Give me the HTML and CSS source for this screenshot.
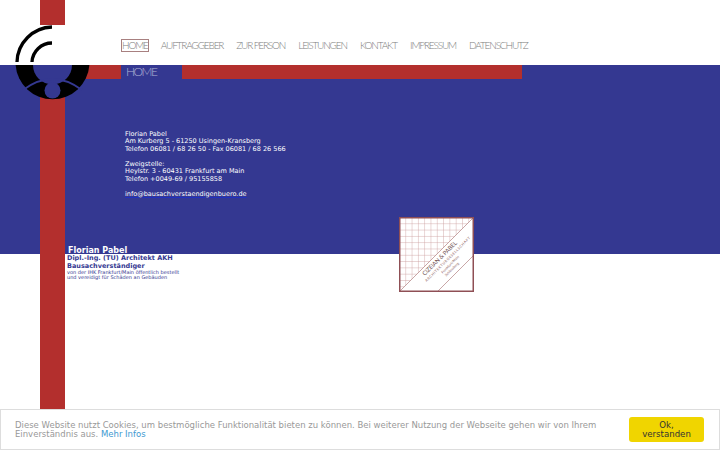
FILE: index.html
```html
<!DOCTYPE html>
<html lang="de">
<head>
    <meta charset="UTF-8">
    <title>Florian Pabel - Home</title>
    <link rel="stylesheet" href="styles.css">
</head>
<body>

<div class="stripe"></div>

<svg class="logo" width="75" height="76" viewBox="0 0 75 76">
    <rect width="75" height="40" fill="#fff"/>
    <path d="M 37 2 A 36 36 0 0 0 2 37" fill="none" stroke="#000" stroke-width="3.300"/>
    <path d="M 37 18 A 20 20 0 0 0 17 37" fill="none" stroke="#000" stroke-width="3.300"/>
    <path d="M 0.600 40 H 74.400 A 37 37 0 0 1 0.600 40 Z" fill="#000"/>
    <path d="M 18 40 H 57 A 19.500 19.500 0 0 1 18 40 Z" fill="#343891"/>
    <path d="M 8 65 Q 37.500 43 67 65" fill="none" stroke="#343891" stroke-width="2"/>
    <circle cx="37.500" cy="65.500" r="8" fill="#343891"/>
</svg>

<header class="header">
    <nav class="nav">
        <a class="active" href="#">HOME</a>
        <a href="#">AUFTRAGGEBER</a>
        <a href="#">ZUR PERSON</a>
        <a href="#">LEISTUNGEN</a>
        <a href="#">KONTAKT</a>
        <a href="#">IMPRESSUM</a>
        <a href="#">DATENSCHUTZ</a>
    </nav>
</header>

<section class="band">
    <div class="band-bar">
        <div class="bar-title">HOME</div>
        <div class="bar-red"></div>
    </div>
    <div class="address">
        <p>Florian Pabel<br>Am Kurberg 5 - 61250 Usingen-Kransberg<br>Telefon 06081 / 68 26 50 - Fax 06081 / 68 26 566</p>
        <p>Zweigstelle:<br>Heylstr. 3 - 60431 Frankfurt am Main<br>Telefon +0049-69 / 95155858</p>
        <p><a href="#">info@bausachverstaendigenbuero.de</a></p>
    </div>
    <div class="name">Florian Pabel</div>
</section>

<section class="below">
    <div class="person">
        <strong>Dipl.-Ing. (TU) Architekt AKH<br>Bausachverständiger</strong>
        <small>von der IHK Frankfurt/Main öffentlich bestellt<br>und vereidigt für Schäden an Gebäuden</small>
    </div>
</section>

<svg class="stamp" width="75" height="75" viewBox="0 0 75 75">
    <defs>
        <pattern id="raster" width="6.300" height="6.300" patternUnits="userSpaceOnUse">
            <path d="M 6.300 0 H 0 V 6.300" fill="none" stroke="#c99a9a" stroke-width="0.800"/>
        </pattern>
    </defs>
    <rect width="75" height="75" fill="#fff"/>
    <path d="M 1 1 H 74 L 1 74 Z" fill="url(#raster)"/>
    <path d="M 1 74 L 74 1 M 39 74 L 74 39" stroke="#b08080" stroke-width="0.700"/>
    <rect x="0.750" y="0.750" width="73.500" height="73.500" fill="none" stroke="#8f4f55" stroke-width="1.500"/>
    <g transform="rotate(-45 37.500 37.500)" class="stamp-text">
        <text class="stamp-big" x="37" y="44.500" text-anchor="middle" textLength="46">CIZEIAN &amp; PABEL</text>
        <text x="42" y="50" text-anchor="middle" textLength="62">ARCHITEKTURGESELLSCHAFT</text>
        <text x="40" y="55.500" text-anchor="middle">Frankfurt/Main</text>
        <text x="38" y="60" text-anchor="middle">Schlossberg</text>
    </g>
</svg>

<div class="cookie">
    <p>Diese Website nutzt Cookies, um bestmögliche Funktionalität bieten zu können. Bei weiterer Nutzung der Webseite gehen wir von Ihrem Einverständnis aus. <a href="#">Mehr Infos</a></p>
    <button class="cookie-btn">Ok, verstanden</button>
</div>

</body>
</html>
```

FILE: styles.css
```css
html, body {
    height: 100%;
}
body {
    position: relative;
    margin: 0;
    overflow: hidden;
    background-color: #fff;
    font-family: 'DejaVu Sans', sans-serif;
}
.stripe {
    position: absolute;
    top: 0;
    left: 40px;
    width: 25px;
    height: 100%;
    background-color: #b32f2d;
}
.logo {
    position: absolute;
    top: 25px;
    left: 15px;
}
.header {
    height: 65px;
    padding-left: 122px;
    box-sizing: border-box;
}
.nav {
    display: flex;
    gap: 13px;
    padding-top: 40px;
}
.nav a {
    font-family: 'Lato', sans-serif;
    font-weight: 300;
    font-size: 10px;
    line-height: 11px;
    letter-spacing: -1.150px;
    color: #7d7d7d;
    text-decoration: none;
    white-space: nowrap;
}
.nav a.active {
    outline: 1px solid #a88080;
}
.band {
    display: flex;
    flex-direction: column;
    height: 189px;
    background-color: #343891;
    box-sizing: border-box;
}
.band-bar {
    display: flex;
    height: 14px;
    padding-left: 65px;
}
.band-bar::before {
    content: "";
    width: 56px;
    background-color: #b32f2d;
}
.bar-title {
    width: 56px;
    padding-left: 5px;
    font-family: 'Lato', sans-serif;
    font-weight: 300;
    font-size: 12px;
    line-height: 14px;
    letter-spacing: -1.500px;
    color: #b0b2d4;
}
.bar-red {
    width: 340px;
    background-color: #b32f2d;
}
.address {
    padding: 52px 0 0 125px;
    font-size: 6.500px;
    line-height: 7.450px;
    color: #fff;
}
.address p {
    margin: 0 0 7.450px;
}
.address a {
    color: #fff;
    text-decoration: underline;
    text-decoration-color: #2030c0;
}
.name {
    margin-top: auto;
    margin-bottom: -1px;
    padding-left: 68px;
    font-size: 8px;
    line-height: 8px;
    font-weight: bold;
    color: #fff;
}
.below {
    padding-left: 67px;
}
.person {
    color: #343891;
}
.person strong {
    display: block;
    font-size: 6.500px;
    line-height: 7.800px;
    margin-top: 1px;
}
.person small {
    display: block;
    margin-top: -1px;
    font-size: 5px;
    line-height: 5.800px;
}
.stamp {
    position: absolute;
    top: 217px;
    left: 399px;
}
.stamp-text text {
    font-family: 'Lato', sans-serif;
    font-size: 3.500px;
    fill: #8a5a5a;
}
.stamp-text .stamp-big {
    font-size: 6px;
    fill: #6f5050;
}
.cookie {
    position: absolute;
    left: 0;
    right: 0;
    bottom: 0;
    height: 41px;
    display: flex;
    align-items: center;
    gap: 24px;
    padding: 0 15px 0 14px;
    border: 1px solid #ddd;
    box-sizing: border-box;
    background-color: #fff;
}
.cookie p {
    flex: 1;
    margin: 0;
    font-size: 8.500px;
    line-height: 9px;
    color: #999;
}
.cookie a {
    color: #3d9ad1;
    text-decoration: none;
}
.cookie-btn {
    width: 75px;
    height: 25px;
    padding: 0 10px;
    border: none;
    border-radius: 3px;
    background-color: #f0d500;
    color: #333;
    font-family: 'DejaVu Sans', sans-serif;
    font-size: 8.600px;
    line-height: 9px;
}
```
